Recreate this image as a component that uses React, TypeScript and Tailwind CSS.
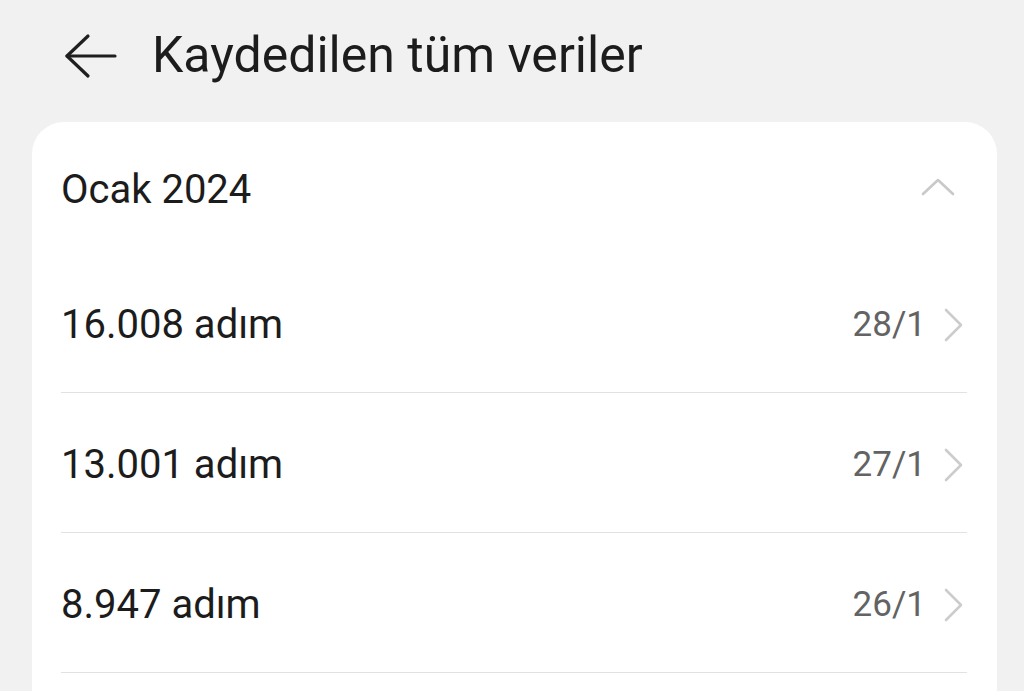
import React from "react";

const rows = [
  { steps: "16.008 adım", date: "28/1" },
  { steps: "13.001 adım", date: "27/1" },
  { steps: "8.947 adım", date: "26/1" },
];

export default function App() {
  return (
    <div
      className="h-[691px] w-[1024px] overflow-hidden bg-[#f1f1f1] flex flex-col"
      style={{ fontFamily: "Roboto, 'Noto Sans', sans-serif" }}
    >
      <div className="h-[110px] flex items-center shrink-0">
        <svg width="56" height="50" viewBox="0 0 56 50" className="ml-[62px]" fill="none">
          <path d="M26 6 L5 26 L26 46" stroke="#1f1f1f" strokeWidth="3.2" strokeLinecap="round" strokeLinejoin="round" />
          <path d="M5 26 H53" stroke="#1f1f1f" strokeWidth="3.2" strokeLinecap="round" />
        </svg>
        <h1 className="ml-[34px] text-[50px] leading-none text-[#1c1c1c] font-normal">
          Kaydedilen tüm veriler
        </h1>
      </div>
      <div className="mt-[12px] ml-[32px] mr-[27px] flex-1 bg-white rounded-t-[32px] pl-[29px] pr-[30px]">
        <div className="h-[131px] pt-[4px] flex items-center justify-between">
          <span className="text-[40px] leading-none text-[#1c1c1c]">Ocak 2024</span>
          <svg width="34" height="20" viewBox="0 0 34 20" className="mr-[12px] -mt-[6px]" fill="none">
            <path d="M2 17 L17 3 L32 17" stroke="#c9c9c9" strokeWidth="2.6" strokeLinecap="round" strokeLinejoin="round" />
          </svg>
        </div>
        {rows.map((r) => (
          <div
            key={r.date}
            className="h-[140px] pt-[4px] flex items-center justify-between border-b border-[#e2e2e2]"
          >
            <span className="text-[40px] leading-none text-[#1c1c1c]">{r.steps}</span>
            <div className="flex items-center">
              <span className="text-[35px] leading-none text-[#636363]">{r.date}</span>
              <svg width="20" height="34" viewBox="0 0 20 34" className="ml-[17px] mr-[4px]" fill="none">
                <path d="M3 2 L18 17 L3 32" stroke="#cccccc" strokeWidth="2.6" strokeLinecap="round" strokeLinejoin="round" />
              </svg>
            </div>
          </div>
        ))}
      </div>
    </div>
  );
}
